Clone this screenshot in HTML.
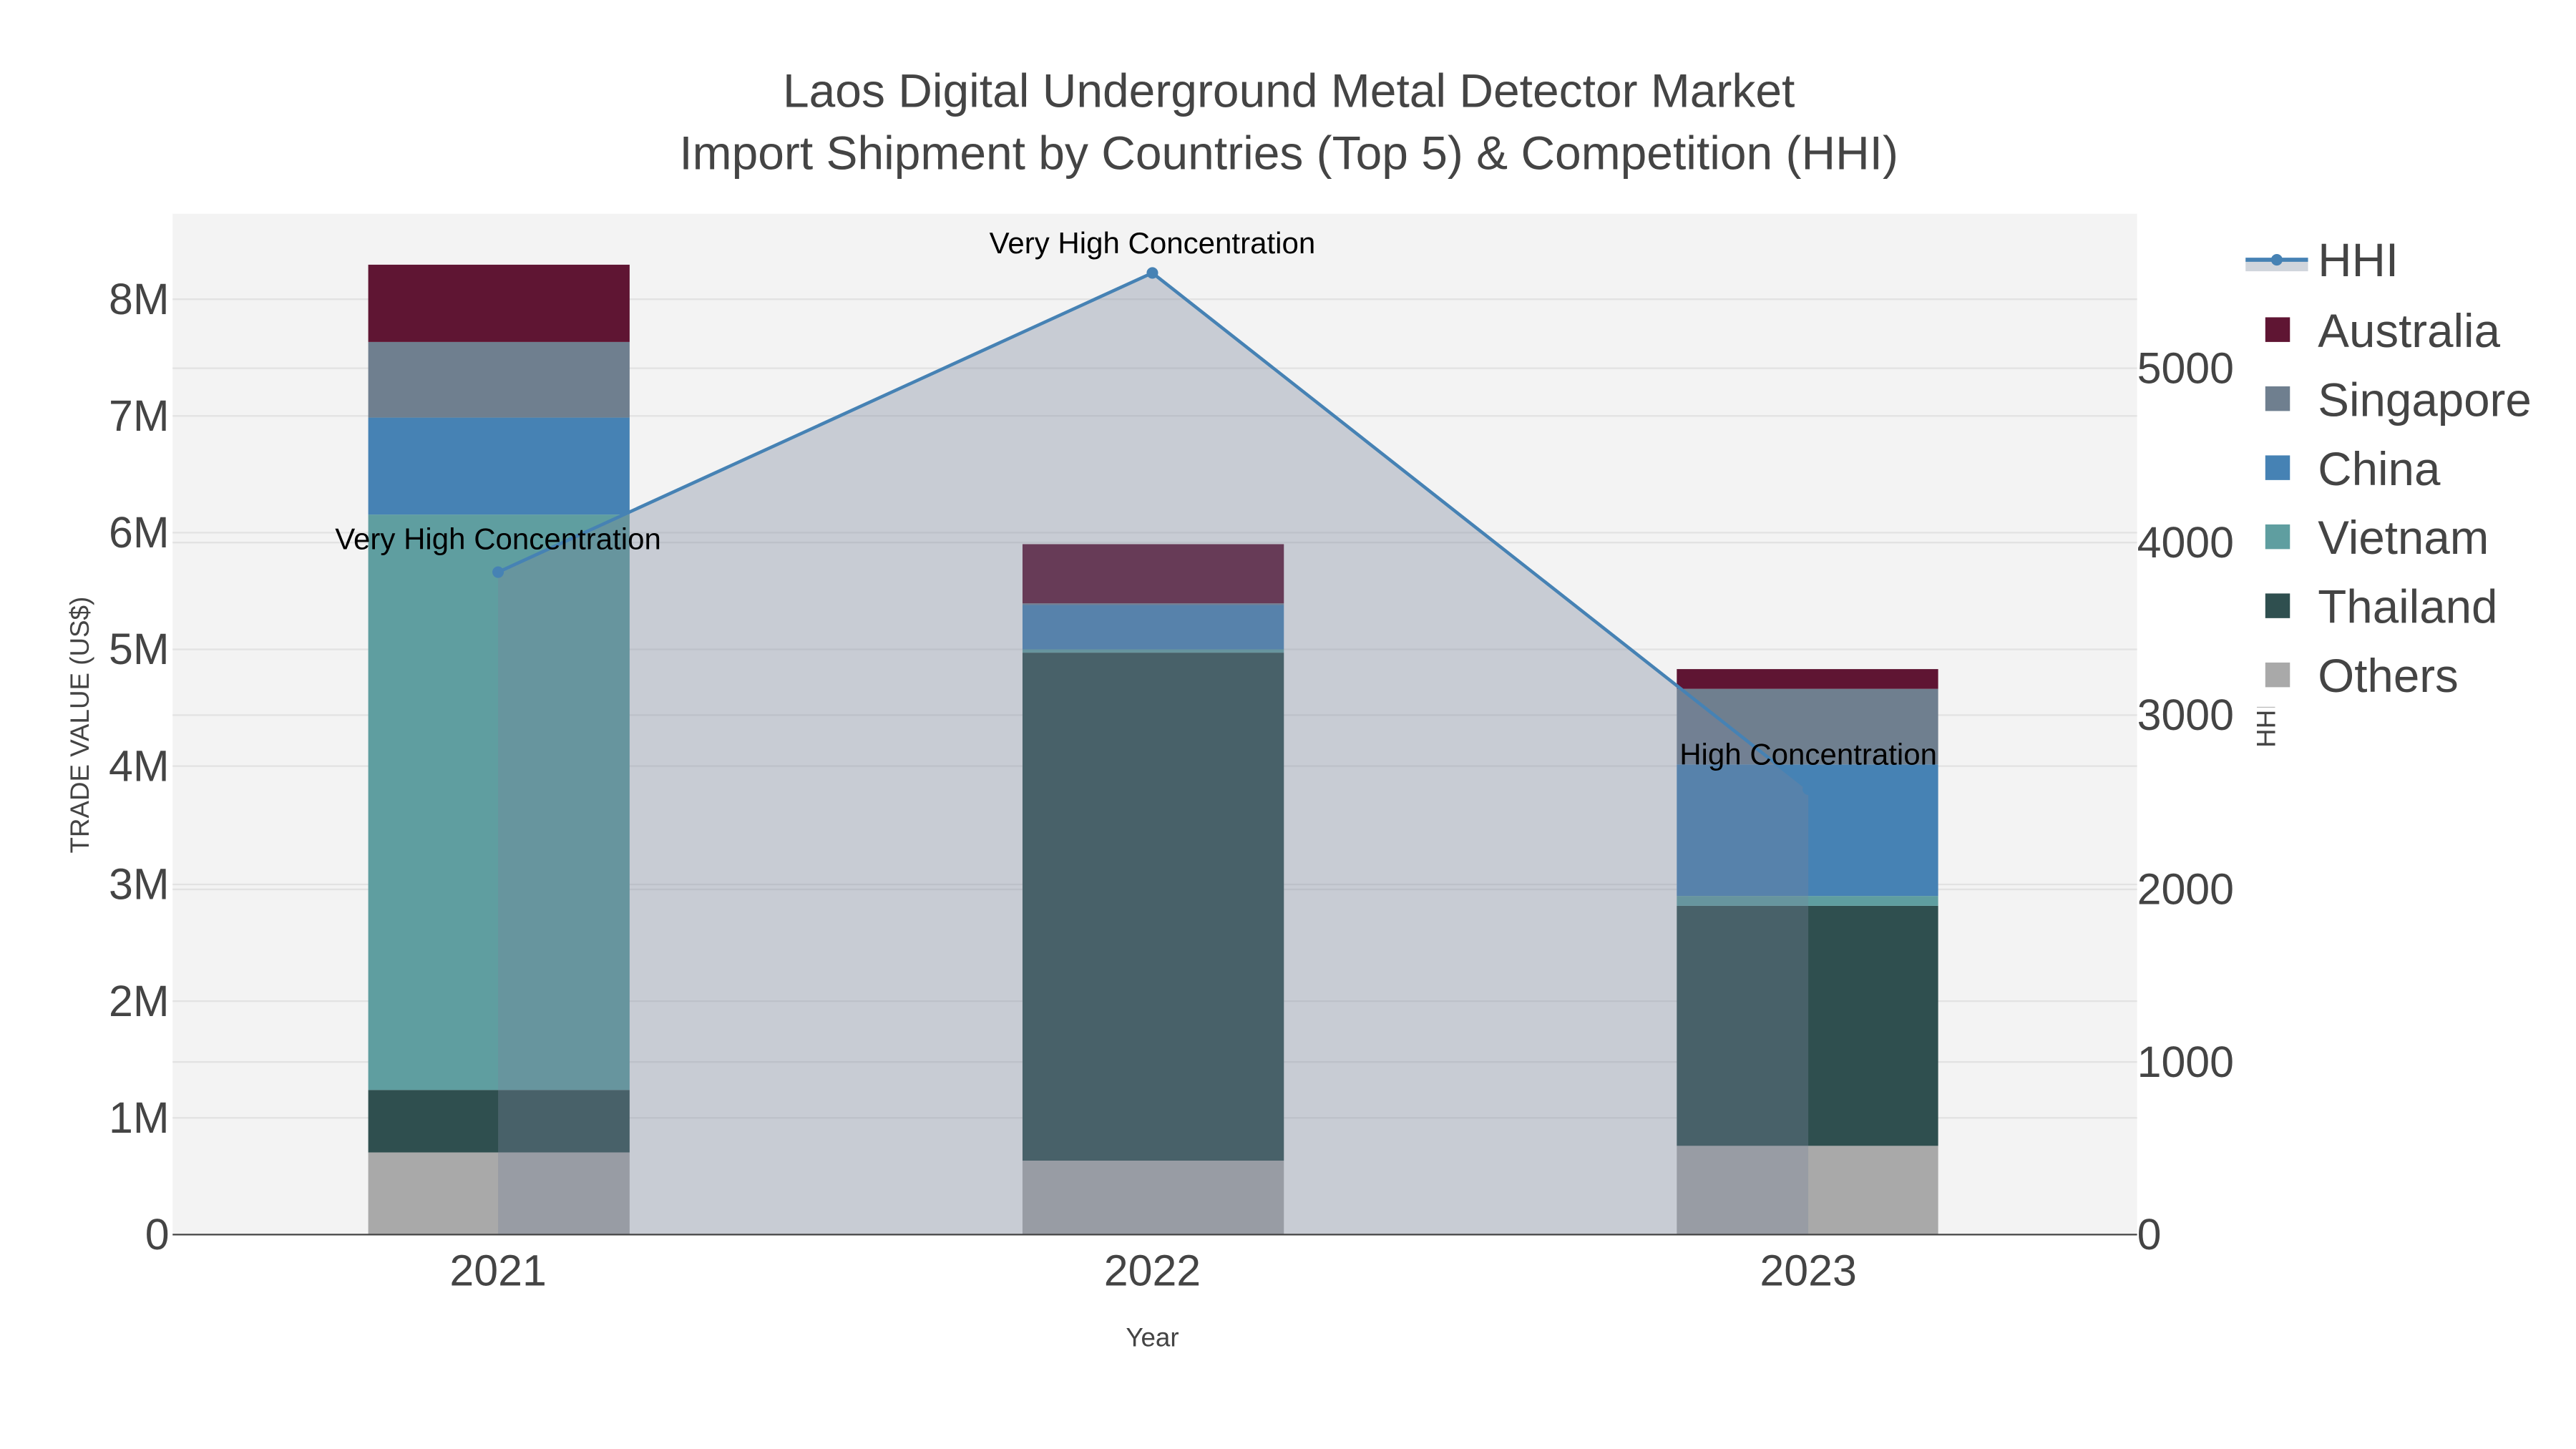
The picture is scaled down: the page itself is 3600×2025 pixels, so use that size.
<!DOCTYPE html>
<html><head><meta charset="utf-8"><style>html,body{margin:0;padding:0;background:#fff}svg{display:block}text{font-family:"Liberation Sans",sans-serif}</style></head>
<body>
<svg width="3600" height="2025" viewBox="0 0 1567 881.4" xmlns="http://www.w3.org/2000/svg">
<rect width="1567" height="881.4" fill="#fff"/>
<rect x="105" y="130" width="1195" height="621" fill="#f3f3f3"/>
<g stroke="#e2e2e2" stroke-width="1">
<line x1="105" x2="1300" y1="680" y2="680"/><line x1="105" x2="1300" y1="609" y2="609"/><line x1="105" x2="1300" y1="538" y2="538"/><line x1="105" x2="1300" y1="466" y2="466"/><line x1="105" x2="1300" y1="395" y2="395"/><line x1="105" x2="1300" y1="324" y2="324"/><line x1="105" x2="1300" y1="253" y2="253"/><line x1="105" x2="1300" y1="182" y2="182"/>
<line x1="105" x2="1300" y1="646" y2="646"/><line x1="105" x2="1300" y1="541" y2="541"/><line x1="105" x2="1300" y1="435" y2="435"/><line x1="105" x2="1300" y1="330" y2="330"/><line x1="105" x2="1300" y1="224" y2="224"/>
</g>
<rect x="224" y="701" width="159" height="50" fill="#a9a9a9"/>
<rect x="224" y="663" width="159" height="38" fill="#2f4f4f"/>
<rect x="224" y="313" width="159" height="350" fill="#5f9ea0"/>
<rect x="224" y="254" width="159" height="59" fill="#4682b4"/>
<rect x="224" y="208" width="159" height="46" fill="#6f7f8f"/>
<rect x="224" y="161" width="159" height="47" fill="#5f1533"/>
<rect x="622" y="706" width="159" height="45" fill="#a9a9a9"/>
<rect x="622" y="397" width="159" height="309" fill="#2f4f4f"/>
<rect x="622" y="395" width="159" height="2" fill="#5f9ea0"/>
<rect x="622" y="368" width="159" height="27" fill="#4682b4"/>
<rect x="622" y="367" width="159" height="1" fill="#6f7f8f"/>
<rect x="622" y="331" width="159" height="36" fill="#5f1533"/>
<rect x="1020" y="697" width="159" height="54" fill="#a9a9a9"/>
<rect x="1020" y="551" width="159" height="146" fill="#2f4f4f"/>
<rect x="1020" y="545" width="159" height="6" fill="#5f9ea0"/>
<rect x="1020" y="465" width="159" height="80" fill="#4682b4"/>
<rect x="1020" y="419" width="159" height="46" fill="#6f7f8f"/>
<rect x="1020" y="407" width="159" height="12" fill="#5f1533"/>
<polygon points="303,348 701,166 1100,480 1100,751 303,751" fill="rgba(120,131,154,0.35)"/>
<polyline points="303,348 701,166 1100,480" fill="none" stroke="#4682b4" stroke-width="2"/>
<circle cx="303" cy="348" r="3.5" fill="#4682b4"/><circle cx="701" cy="166" r="3.5" fill="#4682b4"/><circle cx="1100" cy="480" r="3.5" fill="#4682b4"/>
<line x1="105" x2="1300" y1="751" y2="751" stroke="#444" stroke-width="1"/>
<g font-size="18.3" fill="#000" text-anchor="middle">
<text x="303" y="334">Very High Concentration</text>
<text x="701" y="154">Very High Concentration</text>
<text x="1100" y="465">High Concentration</text>
</g>
<g font-size="26.5" fill="#444" text-anchor="end">
<text x="103" y="760">0</text><text x="103" y="689">1M</text><text x="103" y="618">2M</text><text x="103" y="547">3M</text><text x="103" y="475">4M</text><text x="103" y="404">5M</text><text x="103" y="333">6M</text><text x="103" y="262">7M</text><text x="103" y="191">8M</text>
</g>
<g font-size="26.5" fill="#444">
<text x="1300" y="760">0</text><text x="1300" y="655">1000</text><text x="1300" y="550">2000</text><text x="1300" y="444">3000</text><text x="1300" y="339">4000</text><text x="1300" y="233">5000</text>
</g>
<g font-size="26.5" fill="#444" text-anchor="middle">
<text x="303" y="782">2021</text><text x="701" y="782">2022</text><text x="1100" y="782">2023</text>
</g>
<text x="701" y="819" font-size="16" fill="#444" text-anchor="middle">Year</text>
<text transform="translate(54,441) rotate(-90)" font-size="16" fill="#444" text-anchor="middle">TRADE VALUE (US$)</text>
<text transform="translate(1384,441) rotate(-90)" font-size="16" fill="#444" text-anchor="middle">HHI</text>
<g font-size="28.7" fill="#444" text-anchor="middle">
<text x="784" y="65">Laos Digital Underground Metal Detector Market</text>
<text x="784" y="103">Import Shipment by Countries (Top 5) &amp; Competition (HHI)</text>
</g>
<rect x="1362" y="140" width="205" height="290" fill="#fff"/>
<rect x="1366" y="158" width="38" height="7" fill="#d0d5dc"/>
<line x1="1366" x2="1404" y1="158" y2="158" stroke="#4682b4" stroke-width="2.5"/>
<circle cx="1385" cy="158" r="3.5" fill="#4682b4"/>
<rect x="1378" y="193" width="15" height="15" fill="#5f1533"/>
<rect x="1378" y="235" width="15" height="15" fill="#6f7f8f"/>
<rect x="1378" y="277" width="15" height="15" fill="#4682b4"/>
<rect x="1378" y="319" width="15" height="15" fill="#5f9ea0"/>
<rect x="1378" y="361" width="15" height="15" fill="#2f4f4f"/>
<rect x="1378" y="403" width="15" height="15" fill="#a9a9a9"/>
<g font-size="28.5" fill="#444">
<text x="1410" y="168">HHI</text>
<text x="1410" y="211">Australia</text>
<text x="1410" y="253">Singapore</text>
<text x="1410" y="295">China</text>
<text x="1410" y="337">Vietnam</text>
<text x="1410" y="379">Thailand</text>
<text x="1410" y="421">Others</text>
</g>
</svg>
</body></html>
